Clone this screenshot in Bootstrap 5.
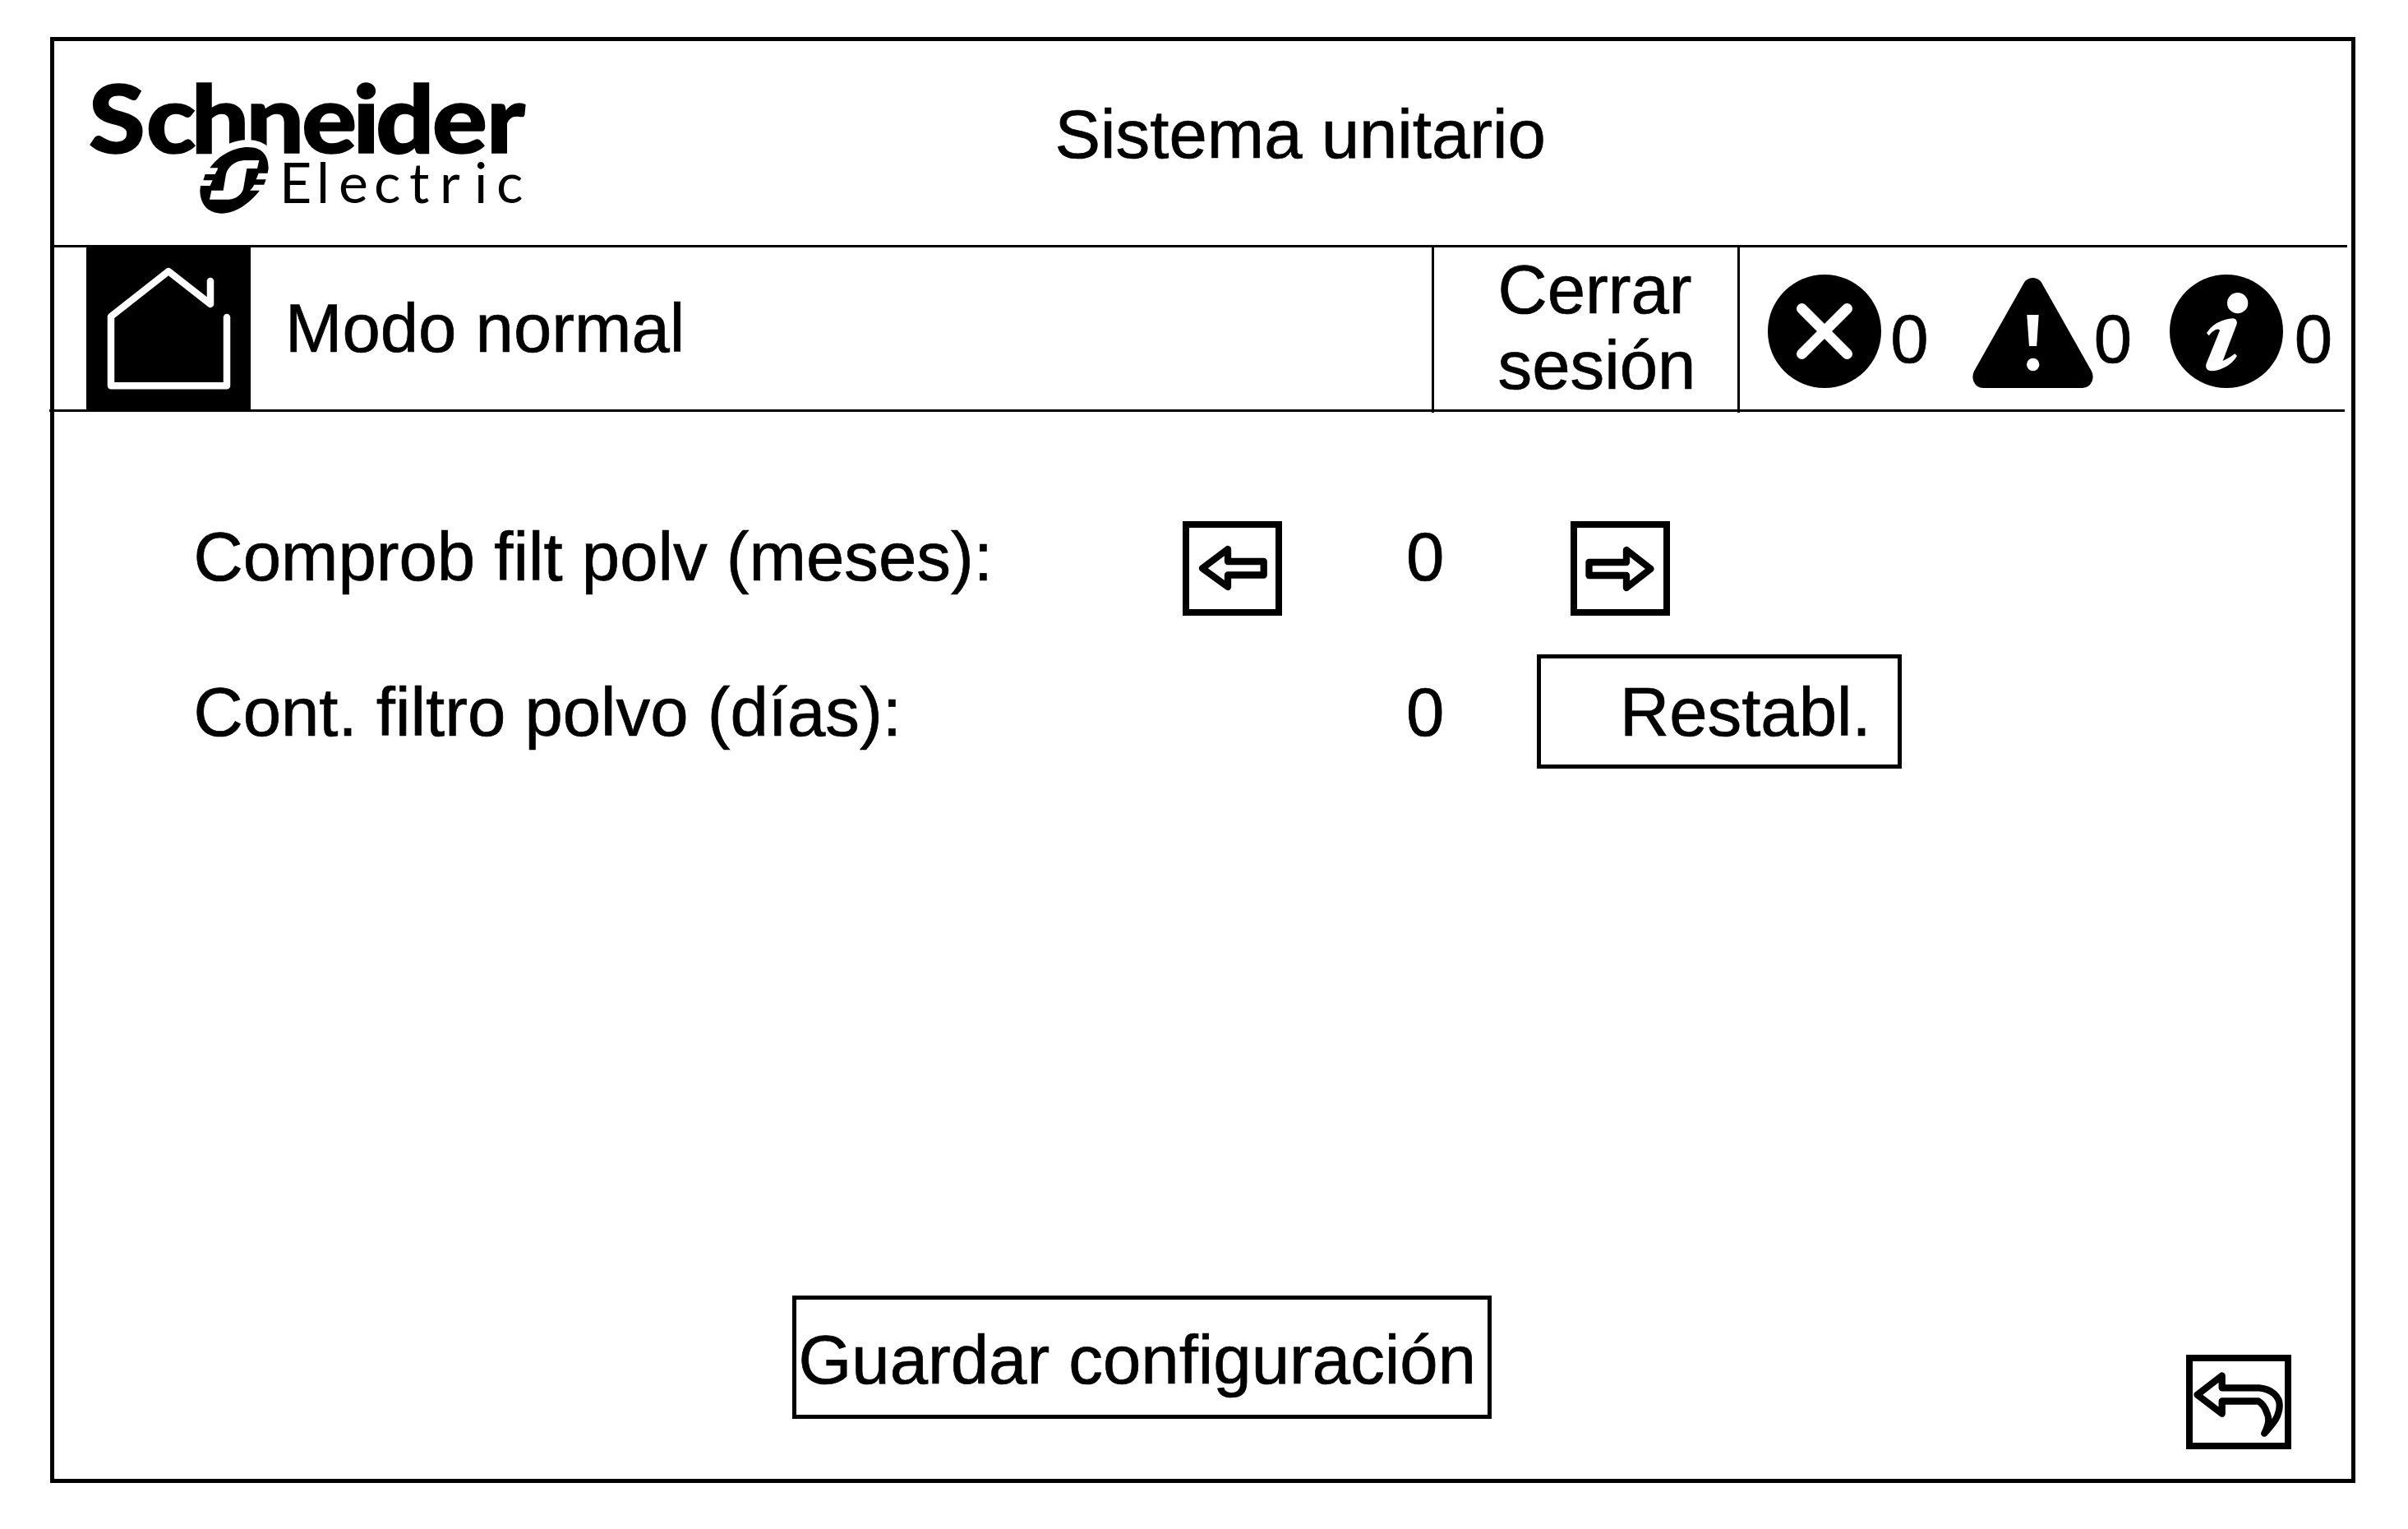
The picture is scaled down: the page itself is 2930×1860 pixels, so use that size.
<!DOCTYPE html>
<html lang="es">
<head>
<meta charset="utf-8">
<title>Sistema unitario</title>
<link href="https://cdn.jsdelivr.net/npm/bootstrap@5.3.0/dist/css/bootstrap.min.css" rel="stylesheet">
<style>
body{margin:0;background:#fff;color:#000;font-family:"Liberation Sans",Arial,sans-serif;font-size:83.333px;line-height:92px;overflow:hidden;-webkit-text-stroke:.7px #000}
.panel{width:2805px;height:1759px;margin:45px 0 0 61px;border:5px solid #000}
.top-bar{height:248px}
.brand{margin-left:34px;width:560px;height:248px}
.screen-title{font-size:inherit;line-height:inherit;font-weight:400;margin:68px 0 0 623.5px}
.mode-bar{width:2790px;height:200px;border-top:3px solid #000}
.home-btn{margin-left:39px;width:200px;height:197px;background:#000}
.mode-name{width:1437px;padding:53px 0 0 42px}
.logout{width:372px;height:201px;border-left:3px solid #000;padding:6px 0 0 77.5px}
.status{height:201px;border-left:3px solid #000;padding-left:34px}
.status svg{margin-top:33px}
.count{width:47px;margin-top:65.5px;text-indent:.7px}
.rule{width:2793px;height:3px;margin-left:-6px;background:#000}
.form-area{padding:131px 0 0 168.5px}
.r1{height:117px}
.r2{height:139px;margin-top:47px}
.lbl{width:1204.5px;text-indent:1px}
.lbl-wide{width:1476px;text-indent:1px}
.r2 .val,.lbl-wide{margin-top:24.5px}
.val{width:47px;text-indent:.5px}
.key,.key:hover{border:8px solid #000;border-radius:0;padding:0;background:#fff;line-height:0;flex:none}
.key svg{margin:-8px}
.key-arrow{width:121px;height:115px;margin-top:2px}
.key-back{width:128px;height:115px;margin:72px 0 0 845px}
.box-btn{border:5px solid #000;border-radius:0;color:#000;font-size:inherit;line-height:inherit;text-align:left;background:#fff;padding:0;flex:none}
.reset{width:444px;height:139px;margin-left:112.5px;padding:19.5px 0 0 96px}
.save{width:851px;height:150px;margin-left:898px;padding:28px 0 0 2.5px}
.foot{height:223px}
svg{display:block;flex:none}
.ln{fill:none;stroke:#000;stroke-width:8.3;stroke-linejoin:round;stroke-linecap:round}
.lw{fill:none;stroke:#fff;stroke-linejoin:round;stroke-linecap:round}
</style>
<script src="https://cdn.jsdelivr.net/npm/bootstrap@5.3.0/dist/js/bootstrap.bundle.min.js"></script>
</head>
<body>
<main class="panel d-flex flex-column">
  <header class="top-bar d-flex align-items-start">
    <svg class="brand" viewBox="100 50 560 248" role="img" aria-label="Schneider Electric">
      <text transform="scale(1.1 1)" stroke="#000" stroke-width="1.5" font-family="Lato" font-weight="900" font-size="114" y="186" x="98 161.500 211.300 272 333.700 390.300 415.500 478 538">Schneider</text>
      <text font-family="Lato" font-size="68" y="247" x="340 385 412 455 498 535 577 604">Electric</text>
      <g transform="translate(220 160) scale(.33333)">
        <path stroke="#fff" stroke-width="54" d="M106,133C140,85 195,57 245,57C300,57 320,90 320,135L288,215C250,265 195,299 150,299C100,299 70,265 70,215Z"/>
        <path d="M106,133C140,85 195,57 245,57C300,57 320,90 320,135L317,152H265L261,175H311L304,194H254L249,215H288C250,265 195,299 150,299C100,299 70,265 70,215L72,198H118L123,178H82L89,156H131L135,133Z"/>
        <path fill="#fff" stroke="none" d="M286,105H230C195,108 172,130 165,155L155,215H112L105,248H175C205,246 222,228 228,210L241,135H279Z"/>
      </g>
    </svg>
    <h1 class="screen-title text-nowrap">Sistema unitario</h1>
  </header>
  <nav class="mode-bar d-flex align-items-start text-nowrap">
    <a class="home-btn d-block" href="#" aria-label="Inicio">
      <svg width="200" height="197" viewBox="105 301 200 197"><path class="lw" stroke-width="8.5" d="M276,386V469.3H135V385L205,330L256,370V342"/></svg>
    </a>
    <div class="mode-name">Modo normal</div>
    <div class="logout">Cerrar<br>sesión</div>
    <div class="status d-flex align-items-start">
      <svg width="138" height="138" viewBox="0 0 138 138"><circle cx="69" cy="69" r="69"/><path class="lw" stroke-width="13" d="M41.500 41.500L96.500 96.500M96.500 41.500L41.500 96.500"/></svg>
      <div class="count" style="margin-left:10.5px">0</div>
      <svg style="margin-left:53.5px" width="147" height="138" viewBox="2400 334 147 138"><path d="M2462.500 344.500Q2466 338 2473.500 338T2484.500 344.500L2545 451.500Q2548 458 2545.500 464Q2542 472 2534 472H2413Q2405 472 2401.500 464Q2399 458 2402 451.500Z"/><path fill="#fff" d="M2466.300 383H2480.700L2478.200 421H2469Z"/><circle cx="2473.700" cy="443.500" r="7.700" fill="#fff"/></svg>
      <div class="count">0</div>
      <svg style="margin-left:46px" width="138" height="138" viewBox="60 41 414 414"><circle cx="267" cy="248" r="207"/><circle cx="308" cy="145" r="38" fill="#fff"/><path fill="#fff" d="M195,254Q215,223 250,210Q275,201 292,201Q308,204 305,222L254,356Q275,348 298,330L306,338Q290,366 258,381Q235,393 212,393Q188,390 193,368L243,245Q240,238 228,242Q215,248 203,264Z"/></svg>
      <div class="count" style="margin-left:13px">0</div>
    </div>
  </nav>
  <div class="rule"></div>
  <section class="form-area text-nowrap">
    <div class="r1 d-flex align-items-start">
      <div class="lbl">Comprob filt polv (meses):</div>
      <button class="btn key key-arrow" aria-label="Menos"><svg width="121" height="115"><path class="ln" d="M24,57.300L55,34V49H98.700V65.500H55V80Z"/></svg></button>
      <div class="val" style="margin-left:150.5px">0</div>
      <button class="btn key key-arrow" style="margin-left:153.5px" aria-label="Más"><svg width="121" height="115"><path class="ln" d="M97.500,58L68,35V50H22.500V66H68V81Z"/></svg></button>
    </div>
    <div class="r2 d-flex align-items-start">
      <div class="lbl-wide">Cont. filtro polvo (días):</div>
      <div class="val">0</div>
      <button class="btn box-btn reset d-flex align-items-start">Restabl.</button>
    </div>
  </section>
  <footer class="foot d-flex align-items-start mt-auto text-nowrap">
    <button class="btn box-btn save d-flex align-items-start">Guardar configuración</button>
    <button class="btn key key-back" aria-label="Volver"><svg width="128" height="115"><path class="ln" d="M13.500,48.700L43.700,25.500V40.300H89C104,41.500 114,51 113.700,62C113,78 104,85 95.300,95.700C102,83 101,76 98,70C96,64 92,59 88,56.500H43.700V71.700Z"/></svg></button>
  </footer>
</main>
</body>
</html>
